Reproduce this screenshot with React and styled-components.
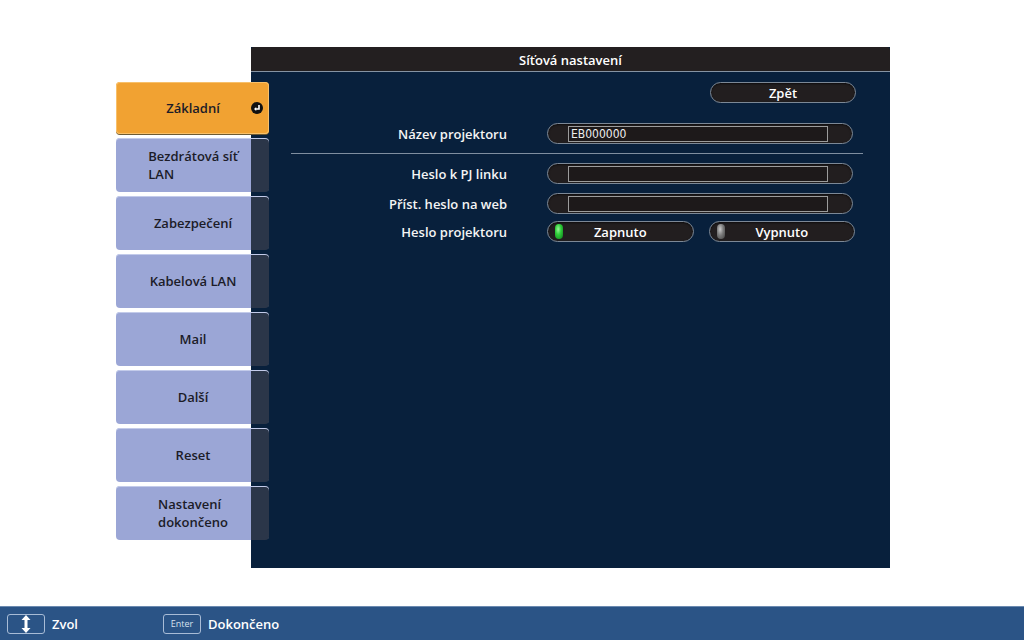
import React from "react";
import styled, { createGlobalStyle } from "styled-components";

const Global = createGlobalStyle`
  html, body {
    margin: 0;
    padding: 0;
    background: #ffffff;
  }
  body {
    font-family: "Open Sans", "Liberation Sans", sans-serif;
  }
`;

const Screen = styled.div`
  width: 1024px;
  height: 640px;
  display: flex;
  flex-direction: column;
  overflow: hidden;
`;

const Main = styled.div`
  flex: 1;
  display: flex;
  padding: 47px 0 0 116px;
`;

const Tabs = styled.div`
  width: 153px;
  margin-top: 35px;
  margin-right: -18px;
  display: flex;
  flex-direction: column;
  gap: 4px;
  position: relative;
  z-index: 1;
`;

const Tab = styled.div`
  position: relative;
  height: ${(props) => (props.active ? 52 : 54)}px;
  border-radius: 4px;
  display: flex;
  align-items: center;
  justify-content: center;
  box-sizing: border-box;
  background: ${(props) =>
    props.active
      ? "#f1a232"
      : "linear-gradient(to right, #9ba6d6 0, #9ba6d6 135px, #2b3649 135px)"};
  box-shadow: ${(props) =>
    props.active
      ? "inset 0 0 0 1px #f8c06a, 0 1px 0 #6d5a33"
      : "inset 0 1px 0 #c3cbea"};
  color: #1c1c28;
  font-size: 13px;
  font-weight: 600;
  line-height: 18px;
`;

const TabText = styled.span`
  display: inline-block;
  text-align: left;
  padding-left: 1px;
`;

const EnterMark = styled.span`
  position: absolute;
  right: 6px;
  top: 20px;
  width: 12px;
  height: 12px;
  border-radius: 50%;
  background: #111;
  display: flex;
  align-items: center;
  justify-content: center;
`;

const Panel = styled.section`
  width: 639px;
  height: 521px;
  background: #08203c;
  display: flex;
  flex-direction: column;
`;

const TitleBar = styled.div`
  height: 25px;
  background: #231f20;
  border-bottom: 1px solid #8593a3;
  border-radius: 3px 3px 0 0;
  color: #ffffff;
  font-size: 13px;
  font-weight: 600;
  display: flex;
  align-items: center;
  justify-content: center;
  padding-top: 2px;
  box-sizing: border-box;
`;

const Content = styled.div`
  padding: 10px 27px 0 40px;
  display: grid;
  grid-template-columns: 216px 306px;
  column-gap: 40px;
  align-items: center;
`;

const Pill = styled.div`
  height: 21px;
  box-sizing: border-box;
  border-radius: 11px;
  background: #221e1f;
  border: 1px solid #7c8896;
  box-shadow: inset 0 1px 2px rgba(0, 0, 0, 0.6);
  color: #ffffff;
  font-size: 13px;
  font-weight: 600;
  display: flex;
  align-items: center;
  justify-content: center;
  position: relative;
`;

const BackRow = styled.div`
  grid-column: 1 / span 2;
  display: flex;
  justify-content: flex-end;
  margin-right: -3px;
  height: 21px;
  margin-bottom: 20px;
`;

const BackButton = styled(Pill)`
  width: 146px;
`;

const Label = styled.div`
  text-align: right;
  color: #f4f4f4;
  font-size: 13px;
  font-weight: 600;
  height: 21px;
  line-height: 23px;
`;

const Field = styled(Pill)`
  justify-content: flex-start;
  padding: 0 24px 0 20px;
`;

const InputBox = styled.div`
  flex: 1;
  height: 16px;
  box-sizing: border-box;
  border: 1px solid #9c9c9c;
  background: #1d191a;
  color: #eeeeee;
  font-family: "DejaVu Sans Condensed", "Liberation Sans Narrow", sans-serif;
  font-weight: 400;
  font-size: 12px;
  line-height: 14px;
  padding-left: 2px;
  transform-origin: left center;
`;

const Separator = styled.div`
  grid-column: 1 / span 2;
  height: 1px;
  background: #7f8ea0;
  margin: 9px -10px 9px 0;
`;

const Gap = styled.div`
  grid-column: 1 / span 2;
  height: ${(props) => props.h}px;
`;

const Toggles = styled.div`
  display: flex;
  gap: 15px;
  margin-right: -2px;
`;

const Toggle = styled(Pill)`
  flex: 1;
`;

const Led = styled.span`
  position: absolute;
  left: 7px;
  top: 2px;
  width: 8px;
  height: 15px;
  border-radius: 4px;
  background: ${(props) =>
    props.on
      ? "radial-gradient(ellipse at 40% 35%, #9df59a 0, #2fcf3a 40%, #0f7a1c 100%)"
      : "radial-gradient(ellipse at 40% 35%, #c9c9c9 0, #7a7a7a 45%, #3e3e3e 100%)"};
`;

const Footer = styled.footer`
  height: 34px;
  background: #2b5486;
  border-top: 1px solid #6b8ab0;
  box-sizing: border-box;
  display: flex;
  align-items: center;
  padding-left: 7px;
  color: #ffffff;
  font-size: 13px;
  font-weight: 600;
`;

const KeyBox = styled.span`
  width: 38px;
  height: 20px;
  box-sizing: border-box;
  border: 1px solid #a8bcd6;
  border-radius: 3px;
  display: flex;
  align-items: center;
  justify-content: center;
  color: #d8e2ee;
  font-size: 9px;
  font-weight: 400;
  margin-right: 7px;
`;

const Hint = styled.span`
  width: ${(props) => props.w}px;
`;

const tabs = [
  ["Základní"],
  ["Bezdrátová síť", "LAN"],
  ["Zabezpečení"],
  ["Kabelová LAN"],
  ["Mail"],
  ["Další"],
  ["Reset"],
  ["Nastavení", "dokončeno"],
];

export default function App() {
  return (
    <Screen>
      <Global />
      <Main>
        <Tabs>
          {tabs.map((lines, i) => (
            <Tab key={lines[0]} active={i === 0}>
              <TabText>
                {lines.map((l, j) => (
                  <React.Fragment key={l}>
                    {j > 0 && <br />}
                    {l}
                  </React.Fragment>
                ))}
              </TabText>
              {i === 0 && (
                <EnterMark>
                  <svg width="8" height="8" viewBox="0 0 8 8">
                    <path
                      d="M6 1 V5 H2.5"
                      fill="none"
                      stroke="#fff"
                      strokeWidth="1.6"
                    />
                    <path d="M1 5 L3.2 3 V7 Z" fill="#fff" />
                  </svg>
                </EnterMark>
              )}
            </Tab>
          ))}
        </Tabs>
        <Panel>
          <TitleBar>Síťová nastavení</TitleBar>
          <Content>
            <BackRow>
              <BackButton>Zpět</BackButton>
            </BackRow>
            <Label>Název projektoru</Label>
            <Field>
              <InputBox>EB000000</InputBox>
            </Field>
            <Separator />
            <Label>Heslo k PJ linku</Label>
            <Field>
              <InputBox />
            </Field>
            <Gap h={9} />
            <Label>Příst. heslo na web</Label>
            <Field>
              <InputBox />
            </Field>
            <Gap h={7} />
            <Label>Heslo projektoru</Label>
            <Toggles>
              <Toggle>
                <Led on />
                Zapnuto
              </Toggle>
              <Toggle>
                <Led />
                Vypnuto
              </Toggle>
            </Toggles>
          </Content>
        </Panel>
      </Main>
      <Footer>
        <KeyBox>
          <svg width="10" height="18" viewBox="0 0 10 18">
            <path d="M5 0 L9.5 5 H6.5 V13 H9.5 L5 18 L0.5 13 H3.5 V5 H0.5 Z" fill="#fff" />
          </svg>
        </KeyBox>
        <Hint w={111}>Zvol</Hint>
        <KeyBox>Enter</KeyBox>
        <span>Dokončeno</span>
      </Footer>
    </Screen>
  );
}
